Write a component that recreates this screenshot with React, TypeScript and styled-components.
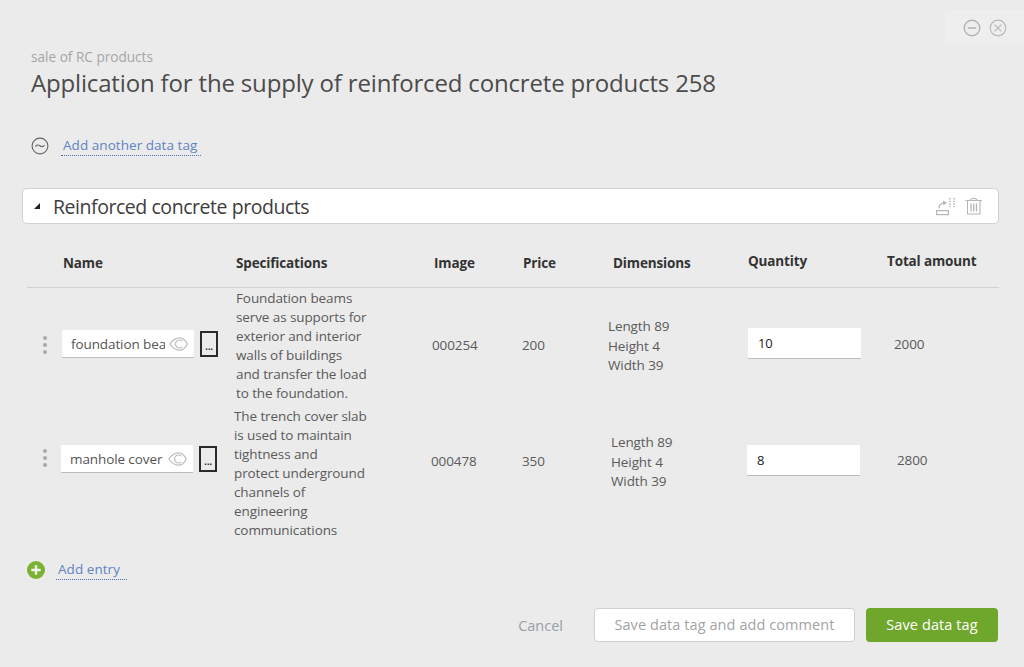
import styled, { createGlobalStyle } from "styled-components";

const GlobalStyle = createGlobalStyle`
  html, body {
    margin: 0;
    padding: 0;
    background: #ebebeb;
  }
  body {
    font-family: "Open Sans", "Noto Sans", "Liberation Sans", sans-serif;
    color: #555;
  }
`;

type RowData = {
  name: string;
  spec: string[];
  image: string;
  price: string;
  dims: string[];
  qty: string;
  total: string;
  columns: string;
  height: number;
  handleTop: number;
  nameTop: number;
  midTop: number;
  dimsTop: number;
  qtyTop: number;
  totalTop: number;
};

const rows: RowData[] = [
  {
    name: "foundation beams",
    spec: [
      "Foundation beams",
      "serve as supports for",
      "exterior and interior",
      "walls of buildings",
      "and transfer the load",
      "to the foundation.",
    ],
    image: "000254",
    price: "200",
    dims: ["Length 89", "Height 4", "Width 39"],
    qty: "10",
    total: "2000",
    columns: "35px 174px 196px 90px 86px 140px 146px 1fr",
    height: 118,
    handleTop: 47,
    nameTop: 41,
    midTop: 47,
    dimsTop: 28,
    qtyTop: 39,
    totalTop: 46,
  },
  {
    name: "manhole cover",
    spec: [
      "The trench cover slab",
      "is used to maintain",
      "tightness and",
      "protect underground",
      "channels of",
      "engineering",
      "communications",
    ],
    image: "000478",
    price: "350",
    dims: ["Length 89", "Height 4", "Width 39"],
    qty: "8",
    total: "2800",
    columns: "34px 173px 197px 91px 89px 136px 150px 1fr",
    height: 133,
    handleTop: 42,
    nameTop: 38,
    midTop: 45,
    dimsTop: 26,
    qtyTop: 38,
    totalTop: 44,
  },
];

const Minus = () => (
  <svg width="18" height="18" viewBox="0 0 18 18" fill="none" stroke="#b4b4b4" strokeWidth="1.4">
    <circle cx="9" cy="9" r="7.8" />
    <path d="M4.8 9h8.4" strokeWidth="1.6" />
  </svg>
);

const CloseCircle = () => (
  <svg width="18" height="18" viewBox="0 0 18 18" fill="none" stroke="#b9b9b9" strokeWidth="1.2">
    <circle cx="9" cy="9" r="7.8" />
    <path d="M5.6 5.6l6.8 6.8M12.4 5.6l-6.8 6.8" />
  </svg>
);

const WaveCircle = () => (
  <svg width="18" height="18" viewBox="0 0 18 18" fill="none" stroke="#666" strokeWidth="1.1">
    <circle cx="9" cy="9" r="7.9" />
    <path d="M4.4 9.6c1.2-2 2.8-2 4.4-.8s3.2 1.2 4.8-.6" />
  </svg>
);

const MoveIcon = () => (
  <svg width="20" height="19" viewBox="0 0 20 19" fill="none" stroke="#b5b5b5" strokeWidth="1.2">
    <rect x="0.6" y="13.6" width="11.8" height="4" />
    <path d="M3 11.5c0-3 2-5.2 5-5.6" />
    <path d="M7 3.6l4 2.2-3.6 2.4z" fill="#b5b5b5" stroke="none" />
    <path d="M14 1v9M18 1v9" strokeDasharray="1.5 1.2" strokeWidth="1.5" />
  </svg>
);

const TrashIcon = () => (
  <svg width="18" height="18" viewBox="0 0 18 18" fill="none" stroke="#b5b5b5" strokeWidth="1.1">
    <path d="M0.5 3.5h16.5" />
    <path d="M5.5 3.3c.3-2.8 6.2-2.8 6.5 0" />
    <path d="M2.5 4v13h12.5V4" />
    <path d="M6 6.5v8M8.75 6.5v8M11.5 6.5v8" strokeWidth="1.3" />
  </svg>
);

const EyeIcon = () => (
  <svg width="19" height="14" viewBox="0 0 19 14" fill="none" stroke="#bdbdbd" strokeWidth="1.2">
    <path d="M0.8 7C4 2.4 7.5 .8 10.5 .8c3.300 0 6 2.400 7.700 6.200-1.700 3.800-4.400 6.200-7.700 6.200C7.500 13.200 4 11.600 .8 7z" />
    <path d="M13.4 4.200a4 4 0 1 0 0 5.600" />
  </svg>
);

const PlusCircle = () => (
  <svg width="18" height="18" viewBox="0 0 18 18">
    <circle cx="9" cy="9" r="9" fill="#7cb232" />
    <path d="M9 4.3v9.400M4.300 9h9.400" stroke="#f2f2f2" strokeWidth="2.400" />
  </svg>
);

export default function App() {
  return (
    <Page>
      <GlobalStyle />
      <WindowButtons>
        <Minus />
        <CloseCircle />
      </WindowButtons>

      <Subtitle>sale of RC products</Subtitle>
      <Title>Application for the supply of reinforced concrete products 258</Title>

      <TagRow>
        <WaveCircle />
        <TagLink>Add another data tag</TagLink>
      </TagRow>

      <Panel>
        <Triangle />
        <PanelTitle>Reinforced concrete products</PanelTitle>
        <PanelIcons>
          <MoveIcon />
          <TrashIcon />
        </PanelIcons>
      </Panel>

      <TableHead>
        <HeadCell>Name</HeadCell>
        <HeadCell>Specifications</HeadCell>
        <HeadCell>Image</HeadCell>
        <HeadCell>Price</HeadCell>
        <HeadCell>Dimensions</HeadCell>
        <HeadCell $raised>Quantity</HeadCell>
        <HeadCell $raised>Total amount</HeadCell>
      </TableHead>

      <Rows>
        {rows.map((row) => (
          <Row key={row.name} $columns={row.columns} $height={row.height}>
            <Handle $top={row.handleTop}>
              <Dot />
              <Dot />
              <Dot />
            </Handle>
            <NameCell $top={row.nameTop}>
              <NameField>
                <NameText>{row.name}</NameText>
                <EyeIcon />
              </NameField>
              <PickButton>...</PickButton>
            </NameCell>
            <Spec>
              {row.spec.map((line) => (
                <Line key={line}>{line}</Line>
              ))}
            </Spec>
            <Cell $top={row.midTop}>{row.image}</Cell>
            <Cell $top={row.midTop}>{row.price}</Cell>
            <Cell $top={row.dimsTop}>
              {row.dims.map((line) => (
                <Line key={line}>{line}</Line>
              ))}
            </Cell>
            <QtyField $top={row.qtyTop}>{row.qty}</QtyField>
            <Cell $top={row.totalTop}>{row.total}</Cell>
          </Row>
        ))}
      </Rows>

      <AddRow>
        <PlusCircle />
        <EntryLink>Add entry</EntryLink>
      </AddRow>

      <Footer>
        <CancelLink>Cancel</CancelLink>
        <SecondaryButton>Save data tag and add comment</SecondaryButton>
        <PrimaryButton>Save data tag</PrimaryButton>
      </Footer>
    </Page>
  );
}

const Page = styled.div`
  position: relative;
  box-sizing: border-box;
  width: 1024px;
  height: 667px;
  padding: 48px 25px 0 27px;
  overflow: hidden;
  background: #ebebeb;
`;

const WindowButtons = styled.div`
  position: absolute;
  top: 10px;
  right: 0;
  width: 79px;
  height: 35px;
  box-sizing: border-box;
  padding: 9px 17px 0 18px;
  display: flex;
  gap: 8px;
  background: #eeeeee;
`;

const Subtitle = styled.div`
  margin-left: 4px;
  font-size: 13.6px;
  line-height: 18px;
  color: #a6a6a6;
`;

const Title = styled.h1`
  margin: 0 0 0 4px;
  font-size: 24px;
  font-weight: 400;
  line-height: 34px;
  letter-spacing: -0.16px;
  white-space: nowrap;
  color: #4b4b4b;
`;

const TagRow = styled.div`
  display: flex;
  align-items: center;
  margin: 35px 0 0 4px;
  height: 22px;
`;

const TagLink = styled.span`
  margin-left: 12px;
  padding: 0 4px 0 2px;
  font-size: 13.5px;
  line-height: 19px;
  letter-spacing: 0.05px;
  color: #5f83c2;
  border-bottom: 1px dotted #4a6fb0;
`;

const Panel = styled.div`
  box-sizing: border-box;
  display: flex;
  align-items: center;
  margin: 31px 0 0 -5px;
  width: 977px;
  height: 36px;
  padding: 0 15px 0 11px;
  background: #fff;
  border: 1px solid #d2d2d2;
  border-radius: 5px;
`;

const Triangle = styled.span`
  width: 0;
  height: 0;
  border-style: solid;
  border-width: 0 0 6px 6px;
  border-color: transparent transparent #222 transparent;
`;

const PanelTitle = styled.span`
  margin-left: 13px;
  font-size: 19.5px;
  letter-spacing: -0.45px;
  color: #3d3d3d;
`;

const PanelIcons = styled.div`
  display: flex;
  align-items: center;
  gap: 9px;
  margin-left: auto;
`;

const TableHead = styled.div`
  box-sizing: border-box;
  display: grid;
  grid-template-columns: 173px 198px 89px 90px 135px 139px 1fr;
  width: 972px;
  height: 64px;
  padding-left: 36px;
  border-bottom: 1px solid #d2d2d2;
`;

const HeadCell = styled.div<{ $raised?: boolean }>`
  margin-top: ${(p) => (p.$raised ? 28 : 30)}px;
  font-size: 13.5px;
  font-weight: 700;
  line-height: 18px;
  letter-spacing: -0.15px;
  white-space: nowrap;
  color: #333;
`;

const Rows = styled.div`
  padding-top: 1px;
`;

const Row = styled.div<{ $columns: string; $height: number }>`
  display: grid;
  grid-template-columns: ${(p) => p.$columns};
  align-items: start;
  height: ${(p) => p.$height}px;
  font-size: 13.5px;
  letter-spacing: -0.1px;
  color: #5a5a5a;
`;

const Handle = styled.div<{ $top: number }>`
  display: flex;
  flex-direction: column;
  gap: 3px;
  margin: ${(p) => p.$top}px 0 0 16px;
`;

const Dot = styled.span`
  width: 4px;
  height: 4px;
  border-radius: 50%;
  background: #a9a9a9;
`;

const NameCell = styled.div<{ $top: number }>`
  display: flex;
  align-items: flex-start;
  gap: 6px;
  margin-top: ${(p) => p.$top}px;
`;

const NameField = styled.div`
  box-sizing: border-box;
  display: flex;
  align-items: center;
  gap: 4px;
  width: 132px;
  height: 28px;
  padding: 0 6px 0 9px;
  background: #fff;
  border-bottom: 1px solid #bcbcbc;
`;

const NameText = styled.span`
  flex: 1;
  min-width: 0;
  overflow: hidden;
  white-space: nowrap;
  color: #555;
`;

const PickButton = styled.div`
  box-sizing: border-box;
  display: flex;
  justify-content: center;
  align-items: flex-end;
  width: 18px;
  height: 26px;
  margin-top: 1px;
  padding-bottom: 3px;
  border: 2px solid #2b2b2b;
  font-size: 11px;
  font-weight: 600;
  line-height: 12px;
  letter-spacing: -0.4px;
  color: #222;
`;

const Spec = styled.div`
  line-height: 19px;
`;

const Line = styled.div`
  white-space: nowrap;
`;

const Cell = styled.div<{ $top: number }>`
  margin-top: ${(p) => p.$top}px;
  line-height: 19.5px;
`;

const QtyField = styled.div<{ $top: number }>`
  box-sizing: border-box;
  width: 113px;
  height: 31px;
  margin-top: ${(p) => p.$top}px;
  padding-left: 10px;
  background: #fff;
  border-bottom: 1px solid #bcbcbc;
  font-size: 13px;
  line-height: 30px;
  color: #222;
`;

const AddRow = styled.div`
  display: flex;
  align-items: center;
  height: 20px;
  margin-top: 20px;
`;

const EntryLink = styled.span`
  margin-left: 11px;
  padding: 0 7px 0 2px;
  font-size: 13.5px;
  line-height: 19px;
  letter-spacing: 0.05px;
  color: #5f83c2;
  border-bottom: 1px dotted #4a6fb0;
`;

const Footer = styled.div`
  display: flex;
  align-items: center;
  justify-content: flex-end;
  width: 971px;
  margin-top: 28px;
`;

const CancelLink = styled.span`
  margin-right: 31px;
  font-size: 14.5px;
  color: #9a9fa6;
`;

const SecondaryButton = styled.div`
  box-sizing: border-box;
  width: 261px;
  height: 34px;
  margin-right: 11px;
  background: #fff;
  border: 1px solid #d0d0d0;
  border-radius: 4px;
  text-align: center;
  font-size: 14.5px;
  line-height: 32px;
  letter-spacing: 0.08px;
  color: #a3a3a3;
`;

const PrimaryButton = styled.div`
  width: 132px;
  height: 34px;
  background: #6fa72d;
  border-radius: 4px;
  text-align: center;
  font-size: 14.5px;
  line-height: 34px;
  letter-spacing: 0.1px;
  color: #fff;
`;
